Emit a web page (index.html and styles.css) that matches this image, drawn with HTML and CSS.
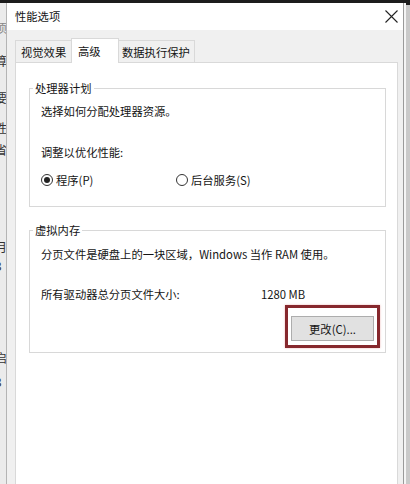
FILE: index.html
```html
<!DOCTYPE html>
<html lang="zh-CN">
<head>
<meta charset="utf-8">
<title>性能选项</title>
<link rel="stylesheet" href="styles.css">
</head>
<body>
<div class="topbar"></div>
<div class="screen">
  <div class="behind-left">
    <div class="bc c1">项</div>
    <div class="bc c2">算</div>
    <div class="bc c3">要</div>
    <div class="bc c4">性</div>
    <div class="bc c5">省</div>
    <div class="bc c6">月</div>
    <div class="bc c7">3</div>
    <div class="bc c8">启</div>
    <div class="bc c9">3</div>
  </div>
  <div class="dialog">
    <div class="titlebar">
      <span class="title">性能选项</span>
      <svg class="close" width="13" height="13" viewBox="0 0 13 13"><path d="M0.5 0.5 L12.5 12.5 M12.5 0.5 L0.5 12.5" stroke="#222" stroke-width="1.1" fill="none"/></svg>
    </div>
    <div class="dlg-body">
      <div class="tabs">
        <div class="tab t1">视觉效果</div>
        <div class="tab active">高级</div>
        <div class="tab t3">数据执行保护</div>
      </div>
      <div class="panel">
        <fieldset class="group g1">
          <legend>处理器计划</legend>
          <p class="line">选择如何分配处理器资源。</p>
          <p class="line l2">调整以优化性能:</p>
          <div class="radios">
            <label class="radio-item first"><span class="radio on"><span class="dot"></span></span>程序(P)</label>
            <label class="radio-item"><span class="radio"></span>后台服务(S)</label>
          </div>
        </fieldset>
        <fieldset class="group g2">
          <legend>虚拟内存</legend>
          <p class="line">分页文件是硬盘上的一块区域，Windows 当作 RAM 使用。</p>
          <div class="size-row"><span class="size-label">所有驱动器总分页文件大小:</span><span class="size-val">1280 MB</span></div>
          <div class="btn-row"><div class="highlight"><button class="btn">更改(C)...</button></div></div>
        </fieldset>
      </div>
    </div>
  </div>
  <div class="behind-right"><div class="br-top"></div></div>
</div>
</body>
</html>
```
FILE: styles.css
```css
* { box-sizing: border-box; }
html, body { margin: 0; padding: 0; }
body {
  width: 410px;
  height: 484px;
  overflow: hidden;
  display: flex;
  flex-direction: column;
  background: #dcdcdc;
  font-family: "Noto Sans CJK SC", "Microsoft YaHei", sans-serif;
  font-size: 11.3px;
  line-height: 14px;
  color: #141414;
}
.topbar { height: 3px; background: #1c1c1c; flex: none; }
.screen { flex: 1; display: flex; min-height: 0; }

.behind-left {
  width: 7px;
  flex: none;
  background: #ebebeb;
  overflow: hidden;
  border-right: 1px solid #b4b4b4;
}
.bc { font-size: 12px; line-height: 12px; height: 12px; margin-left: -5px; color: #333; white-space: nowrap; }
.c1 { margin-top: 19px; color: #888; }
.c2 { margin-top: 21px; }
.c3 { margin-top: 25px; }
.c4 { margin-top: 18px; }
.c5 { margin-top: 10px; }
.c6 { margin-top: 85px; }
.c7 { margin-top: 7px; }
.c8 { margin-top: 80px; }
.c9 { margin-top: 12px; }

.dialog {
  width: 397px;
  flex: none;
  display: flex;
  flex-direction: column;
  background: #f0f0f0;
  border-right: 1px solid #9a9a9a;
}
.titlebar {
  height: 27px;
  flex: none;
  background: #fff;
  display: flex;
  align-items: center;
  justify-content: space-between;
  padding: 0 5px 1px 8px;
}
.title { font-size: 11.3px; }
.close { display: block; }

.dlg-body {
  flex: 1;
  display: flex;
  flex-direction: column;
  padding: 8px 5px 0 8px;
  min-height: 0;
}
.tabs { height: 24px; display: flex; align-items: flex-end; flex: none; }
.tab {
  height: 22px;
  display: flex;
  align-items: center;
  background: #f0f0f0;
  border: 1px solid #d9d9d9;
  border-bottom: none;
  white-space: nowrap;
}
.t1 { width: 56px; padding-left: 5px; border-right: none; }
.t3 { width: 76px; padding-left: 3px; border-left: none; }
.tab.active {
  width: 48px;
  height: 25px;
  padding-left: 6px;
  padding-bottom: 1px;
  background: #fff;
  margin-bottom: -1px;
  position: relative;
  z-index: 1;
}

.panel {
  flex: 1;
  background: #fff;
  border: 1px solid #d9d9d9;
  border-bottom: none;
  padding: 0 11px 0 13px;
}
.group {
  margin: 0;
  border: 1px solid #d8d8d8;
  padding: 0 10px 0 11px;
  min-width: 0;
}
.group legend {
  padding: 0 2px;
  margin-left: -8px;
  line-height: 14px;
}
.g1 { margin-top: 18px; padding-top: 9px; padding-bottom: 19px; }
.g2 { margin-top: 16px; padding-top: 10px; padding-bottom: 4px; }
.line { margin: 0; white-space: nowrap; }
.l2 { margin-top: 27px; }
.radios { display: flex; margin-top: 14px; height: 14px; align-items: center; }
.radio-item { display: flex; align-items: center; white-space: nowrap; }
.radio-item.first { width: 135px; }
.radio {
  width: 12px;
  height: 12px;
  border: 1px solid #333;
  border-radius: 50%;
  margin-right: 3px;
  display: flex;
  align-items: center;
  justify-content: center;
  flex: none;
}
.dot { width: 6px; height: 6px; border-radius: 50%; background: #222; }

.size-row { display: flex; margin-top: 26px; white-space: nowrap; }
.size-label { width: 220px; }
.btn-row { display: flex; justify-content: flex-end; margin-top: 4px; padding-right: 5px; margin-right: -10px; }
.highlight {
  border: 3px solid #86282d;
  padding: 8px 3px 4px 3px;
  box-shadow: 0 0 2px rgba(220, 110, 110, 0.5);
}
.btn {
  display: block;
  width: 83px;
  height: 25px;
  margin: 0;
  padding: 0;
  background: #e1e1e1;
  border: 1px solid #adadad;
  font-family: inherit;
  font-size: 11.3px;
  color: #141414;
}

.behind-right {
  flex: 1;
  background: #c9c9c9;
  border-left: 2px solid #f4f4f4;
}
.br-top { height: 2px; background: #1c1c1c; }
```
